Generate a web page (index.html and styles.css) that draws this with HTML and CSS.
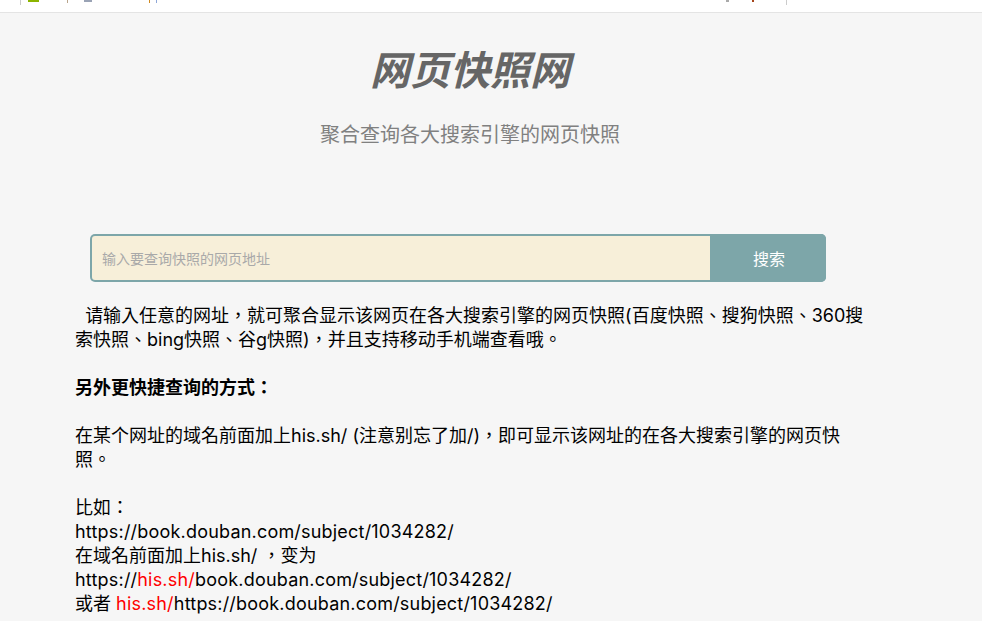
FILE: index.html
```html
<!DOCTYPE html>
<html lang="zh-CN">
<head>
<meta charset="utf-8">
<title>网页快照网</title>
<link rel="stylesheet" href="styles.css">
</head>
<body>
<div class="chrome">
  <span class="tick tick-a"></span>
  <span class="favicon"></span>
  <span class="tick tick-b"></span>
  <span class="tick tick-c"></span>
  <span class="tick tick-d"></span>
  <span class="tick tick-d2"></span>
  <span class="spacer"></span>
  <span class="tick tick-e"></span>
  <span class="tick tick-f"></span>
  <span class="tick tick-g"></span>
</div>
<main class="page">
  <header class="hero">
    <h1 class="title">网页快照网</h1>
    <p class="subtitle">聚合查询各大搜索引擎的网页快照</p>
  </header>
  <form class="search">
    <input class="search-input" type="text" placeholder="输入要查询快照的网页地址">
    <button class="search-button" type="button">搜索</button>
  </form>
  <div class="content" lang="zh-Hant">
    <p>&nbsp;&nbsp;请输入任意的网址，就可聚合显示该网页在各大搜索引擎的网页快照(百度快照、搜狗快照、360搜索快照、bing快照、谷g快照)，并且支持移动手机端查看哦。</p>
    <p><strong>另外更快捷查询的方式：</strong></p>
    <p>在某个网址的域名前面加上his.sh/ (注意别忘了加/)，即可显示该网址的在各大搜索引擎的网页快照。</p>
    <p>比如：<br><span class="en">https://book.douban.com/subject/1034282/</span><br>在域名前面加上his.sh/ ，变为<br><span class="en">https://<span class="hl">his.sh/</span>book.douban.com/subject/1034282/</span><br>或者 <span class="en"><span class="hl">his.sh/</span>https://book.douban.com/subject/1034282/</span></p>
  </div>
</main>
</body>
</html>
```
FILE: styles.css
```css
* { box-sizing: border-box; }
html, body { margin: 0; padding: 0; }
body {
  background: #f6f6f6;
  font-family: "Inter", "Noto Sans CJK TC", sans-serif;
  color: #000;
  overflow: hidden;
}
.chrome {
  height: 13px;
  background: #fff;
  border-bottom: 1px solid #e4e4e4;
  display: flex;
  align-items: flex-start;
  padding-left: 20px;
}
.spacer { flex: 1; }
.tick { display: block; width: 1px; height: 3px; background: #b9a58c; }
.tick-a { height: 5px; background: #ccc; margin-right: 7px; }
.favicon { display: block; width: 11px; height: 2px; background: #8cb400; margin-right: 28px; }
.tick-c { margin-left: 16px; background: #9aa3b5; width: 8px; height: 2px; }
.tick-d { margin-left: 57px; background: #d08a20; }
.tick-d2 { margin-left: 6px; background: #8fa8d8; }
.tick-e { width: 3px; height: 2px; background: #aaa; margin-right: 23px; }
.tick-f { width: 2px; height: 2px; background: #a5451a; margin-right: 32px; }
.tick-g { height: 5px; background: #ccc; margin-right: 195px; }
.page { padding: 0 118px 0 75px; }
.hero { text-align: center; margin-right: -1px; font-family: "Noto Sans CJK SC", sans-serif; }
.title {
  margin: 0;
  padding-top: 29px;
  font-size: 40px;
  line-height: 52px;
  font-weight: 700;
  font-style: italic;
  color: #666;
}
.subtitle {
  margin: 0;
  padding-top: 28px;
  font-size: 20px;
  line-height: 24px;
  color: #808080;
}
.search {
  display: flex;
  width: 736px;
  height: 48px;
  margin: 88px 0 0 15px;
  border-radius: 5px;
  background: #7da6a9;
  overflow: hidden;
}
.search-input {
  flex: 1;
  min-width: 0;
  margin: 2px 0 2px 2px;
  padding: 0 10px;
  border: 0;
  border-radius: 3px 0 0 3px;
  background: #f7efd9;
  font: 14px "Noto Sans CJK SC", sans-serif;
  outline: none;
}
.search-input::placeholder { color: #a9a9a9; opacity: 1; }
.search-button {
  width: 116px;
  border: 0;
  background: #7da6a9;
  color: #fff;
  font: 16px "Noto Sans CJK SC", sans-serif;
  padding: 0 0 1px 2px;
}
.content { margin-top: 22px; font-size: 18px; line-height: 24px; }
.content p { margin: 0 0 24px; }
.content strong { font-weight: 700; }
.en { letter-spacing: 0.2px; }
.hl { color: #f00; }
```
